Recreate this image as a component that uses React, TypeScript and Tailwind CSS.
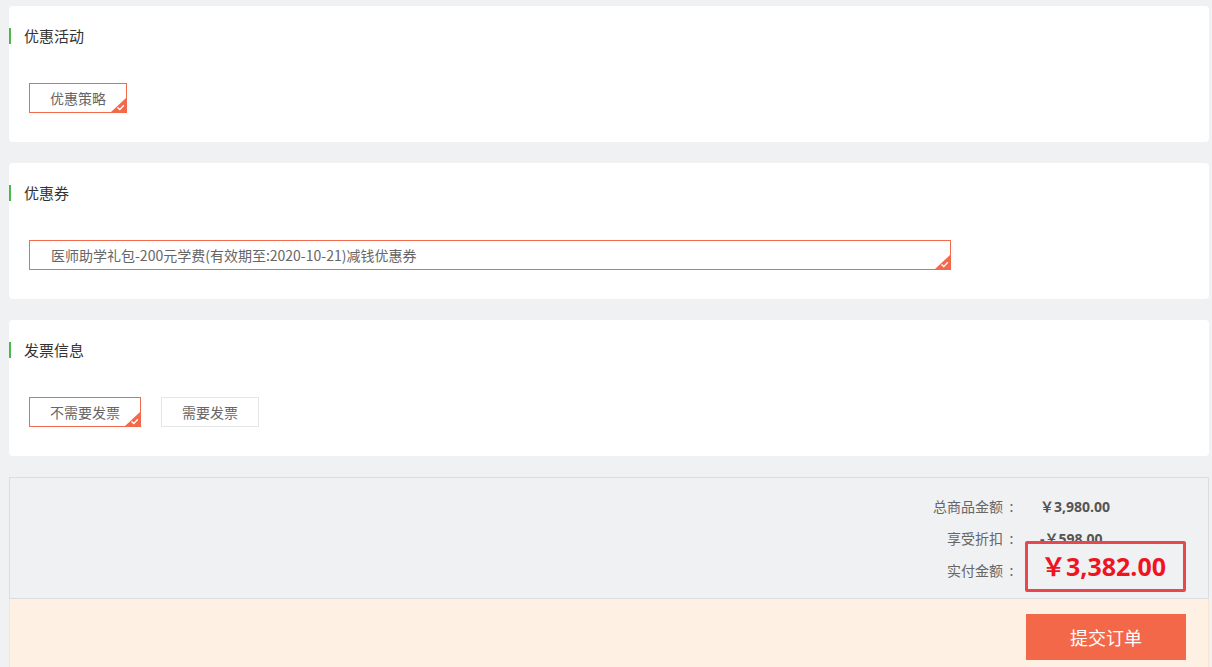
import React from "react";

const CJK = '"Noto Sans CJK SC", "Noto Sans", sans-serif';
const NUM = '"Open Sans", "Noto Sans CJK SC", sans-serif';

function Corner() {
  return (
    <svg
      className="absolute bottom-0 right-0"
      width="15"
      height="14"
      viewBox="0 0 15 14"
    >
      <polygon points="15,0 15,14 0,14" fill="#f26a4b" />
      <path d="M6.5 9.5 L8.8 11.6 L12.8 7.2" stroke="#fff" strokeWidth="1.4" fill="none" />
    </svg>
  );
}

function Option({
  label,
  active,
  className = "",
}: {
  label: string;
  active?: boolean;
  className?: string;
}) {
  return (
    <div
      className={`relative h-[30px] flex items-center px-[20px] text-[14px] text-[#666] border ${
        active ? "border-[#f26a4b]" : "border-[#e5e5e5]"
      } ${className}`}
    >
      <span className="leading-[28px]">{label}</span>
      {active && <Corner />}
    </div>
  );
}

function Card({ title, children }: { title: string; children: React.ReactNode }) {
  return (
    <div className="bg-white rounded-[4px] pt-[22px] pb-[29px]">
      <div className="h-[16px] border-l-2 border-[#4cb84c] pl-[13px] flex items-center text-[15px] text-[#333] leading-[16px]">
        {title}
      </div>
      <div className="mt-[39px] pl-[20px] flex gap-[20px]">{children}</div>
    </div>
  );
}

function Label({ text }: { text: string }) {
  return (
    <span className="flex items-center text-[14px] text-[#666]">
      <span>{text}</span>
      <span className="w-[17px] text-center">:</span>
    </span>
  );
}

export default function App() {
  return (
    <div
      className="min-h-[667px] bg-[#f0f1f3] pt-[6px] pl-[9px] overflow-hidden"
      style={{ fontFamily: CJK }}
    >
      <div className="w-[1200px] flex flex-col gap-[21px]">
        <Card title="优惠活动">
          <Option label="优惠策略" active />
        </Card>
        <Card title="优惠券">
          <Option
            label="医师助学礼包-200元学费(有效期至:2020-10-21)减钱优惠券"
            active
            className="w-[922px] !pl-[21px]"
          />
        </Card>
        <Card title="发票信息">
          <Option label="不需要发票" active />
          <Option label="需要发票" />
        </Card>

        <div>
          <div className="border border-[#dcdddf] bg-[#f0f1f3] pt-[12px] pb-[12px] pr-[22px]">
            {[
              ["总商品金额", "￥3,980.00"],
              ["享受折扣", "-￥598.00"],
            ].map(([l, v]) => (
              <div key={l} className="h-[32px] flex items-center justify-end">
                <Label text={l} />
                <span
                  className="w-[146px] ml-[20px] text-[14px] font-bold text-[#555]"
                  style={{ fontFamily: NUM }}
                >
                  {v}
                </span>
              </div>
            ))}
            <div className="h-[32px] flex items-center justify-end">
              <Label text="实付金额" />
              <span className="relative w-[146px] ml-[20px] h-[32px]">
                <span className="absolute left-[-15px] top-[-13px] w-[161px] h-[51px] border-[3px] border-[#e9474d] rounded-[2px] bg-[#f0f1f3] flex items-center pl-[13px]">
                  <span
                    className="text-[25px] font-bold text-[#f0141e] leading-none"
                    style={{ fontFamily: NUM }}
                  >
                    ￥3,382.00
                  </span>
                </span>
              </span>
            </div>
          </div>
          <div className="h-[80px] bg-[#fef0e3] border-x border-[#fde3cf] pt-[15px] pr-[22px] flex justify-end">
            <button className="w-[160px] h-[46px] bg-[#f4684a] text-white text-[18px]">
              提交订单
            </button>
          </div>
        </div>
      </div>
    </div>
  );
}
